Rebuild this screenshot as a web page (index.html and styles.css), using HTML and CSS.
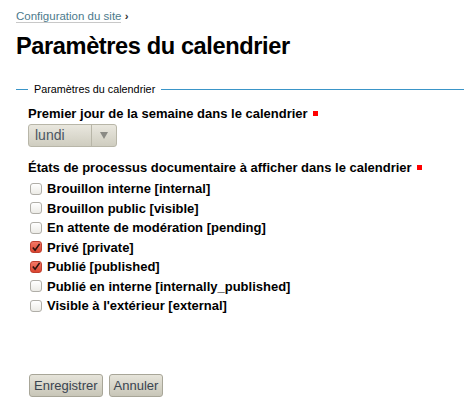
FILE: index.html
```html
<!DOCTYPE html>
<html lang="fr">
<head>
<meta charset="utf-8">
<title>Paramètres du calendrier</title>
<link rel="stylesheet" href="styles.css">
</head>
<body>
<div class="page">
  <div class="breadcrumb"><a href="#" class="crumb">Configuration du site</a> <span class="sep">›</span></div>
  <h1 class="title">Paramètres du calendrier</h1>
  <form class="form">
    <fieldset class="fs">
      <legend class="legend">Paramètres du calendrier</legend>
      <div class="field">
        <label class="flabel">Premier jour de la semaine dans le calendrier <span class="req"></span></label>
        <div class="select"><span class="sel-text">lundi</span><span class="sel-arrow"><svg width="8" height="7" viewBox="0 0 8 7"><path d="M0 0H8L4 7Z" fill="#8a8a84"/></svg></span></div>
      </div>
      <div class="field">
        <label class="flabel">États de processus documentaire à afficher dans le calendrier <span class="req"></span></label>
        <ul class="checks">
          <li class="row"><span class="cb"></span><span class="cl">Brouillon interne [internal]</span></li>
          <li class="row"><span class="cb"></span><span class="cl">Brouillon public [visible]</span></li>
          <li class="row"><span class="cb"></span><span class="cl">En attente de modération [pending]</span></li>
          <li class="row"><span class="cb on"><svg width="11" height="11" viewBox="0 0 11 11"><path d="M2 5.5L4.5 8.5L9.5 1.5" fill="none" stroke="#2a1410" stroke-width="1.8"/></svg></span><span class="cl">Privé [private]</span></li>
          <li class="row"><span class="cb on"><svg width="11" height="11" viewBox="0 0 11 11"><path d="M2 5.5L4.5 8.5L9.5 1.5" fill="none" stroke="#2a1410" stroke-width="1.8"/></svg></span><span class="cl">Publié [published]</span></li>
          <li class="row"><span class="cb"></span><span class="cl">Publié en interne [internally_published]</span></li>
          <li class="row"><span class="cb"></span><span class="cl">Visible à l'extérieur [external]</span></li>
        </ul>
      </div>
    </fieldset>
    <div class="buttons">
      <button type="button" class="btn">Enregistrer</button>
      <button type="button" class="btn">Annuler</button>
    </div>
  </form>
</div>
</body>
</html>
```
FILE: styles.css
```css
html, body { margin: 0; padding: 0; background: #fff; }
body { font-family: "Liberation Sans", Arial, sans-serif; color: #000; }
.page { padding: 8px 0 0 16px; }
.breadcrumb { font-size: 11.5px; line-height: 16px; color: #333; }
.crumb { color: #4c7a8c; text-decoration: none; border-bottom: 1px solid #c8c8c8; }
.sep { color: #333; font-weight: bold; }
.title { font-size: 23.6px; line-height: 28px; margin: 8px 0 0 0; font-weight: bold; letter-spacing: -0.4px; }
.form { margin-top: 23px; }
.fs { border: 0; border-top: 1px solid #3a95c8; margin: 0; padding: 10px 0 0 12px; }
.legend { font-size: 10.8px; padding: 0 6px; margin-left: 0; color: #000; }
.field { margin-bottom: 12px; }
.flabel { display: block; font-weight: bold; font-size: 13px; line-height: 18px; }
.req { display: inline-block; width: 5px; height: 5px; background: #f00; vertical-align: 2px; margin-left: 2px; }
.select { display: flex; width: 89px; height: 23px; margin-top: 1px; border: 1px solid #b8b6a8; border-radius: 3px; background: linear-gradient(#e9e7de, #cfcdc0); box-sizing: border-box; }
.sel-text { flex: 1; font-size: 14px; line-height: 21px; padding-left: 6px; color: #4b5562; }
.sel-arrow { width: 24px; border-left: 1px solid #b8b6a8; display: flex; align-items: center; justify-content: center; }
.checks { list-style: none; margin: 2px 0 0 0; padding: 0; }
.row { display: flex; align-items: center; height: 19.5px; }
.cb { width: 10px; height: 10px; border: 1px solid #b0aea8; border-radius: 3px; background: linear-gradient(#fff, #ecebe6); margin: 0 5px 0 2px; display: flex; align-items: center; justify-content: center; }
.cb.on { background: linear-gradient(#f27866, #dc4530); border-color: #c04030; }
.cl { font-weight: bold; font-size: 13px; }
.buttons { margin: 46px 0 0 13px; display: flex; gap: 6px; }
.btn { font-family: "Liberation Sans", Arial, sans-serif; font-size: 13px; color: #3a4450; height: 23px; padding: 0 4px; border: 1px solid #a8a698; border-radius: 3px; background: linear-gradient(#e6e4da, #c8c6b8); }
```
